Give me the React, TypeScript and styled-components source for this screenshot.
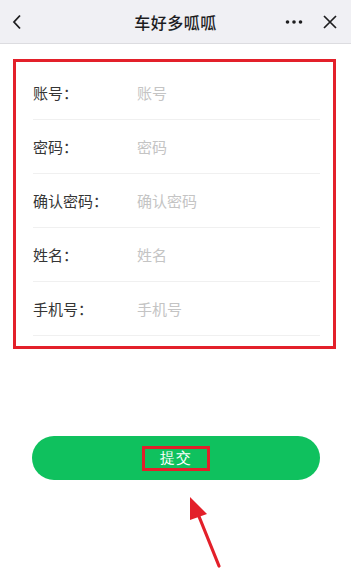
import React from 'react'
import styled, { createGlobalStyle } from 'styled-components'

const GlobalStyle = createGlobalStyle`
  html, body {
    margin: 0;
    padding: 0;
    background: #ffffff;
  }
  body {
    font-family: 'Noto Sans CJK SC', 'Noto Sans', sans-serif;
  }
  * {
    box-sizing: border-box;
  }
`

const Page = styled.div`
  position: relative;
  width: 351px;
  height: 580px;
  overflow: hidden;
  background: #ffffff;
`

const NavBar = styled.div`
  display: grid;
  grid-template-columns: 60px 1fr 60px;
  align-items: center;
  height: 44px;
  background: #f0f0f4;
  border-bottom: 1px solid #dcdce0;
`

const NavTitle = styled.div`
  text-align: center;
  font-size: 16px;
  font-weight: 500;
  color: #1d1d1f;
  letter-spacing: 0.5px;
`

const NavLeft = styled.div`
  display: flex;
  align-items: center;
  padding-left: 12px;
`

const NavRight = styled.div`
  display: flex;
  align-items: center;
  justify-content: flex-end;
  gap: 20px;
  padding-right: 14px;
  margin-left: -20px;
`

const FormBox = styled.div`
  margin: 15px 15px 0 13px;
  border: 3px solid #e3202a;
  padding: 4px 13px 10px 17px;
`

const Row = styled.label`
  display: flex;
  align-items: center;
  height: 54px;
  border-bottom: 1px solid #f0f0f0;
`

const Label = styled.span`
  width: 104px;
  flex-shrink: 0;
  font-size: 15px;
  color: #353535;
`

const Input = styled.input`
  flex: 1;
  min-width: 0;
  border: none;
  outline: none;
  background: transparent;
  font-family: inherit;
  font-size: 15px;
  color: #333;
  padding: 0;
  &::placeholder {
    color: #c4c4c4;
  }
`

const SubmitButton = styled.button`
  display: flex;
  align-items: center;
  justify-content: center;
  width: 288px;
  height: 44px;
  margin: 87px 0 0 32px;
  border: none;
  border-radius: 22px;
  background: #0fc15e;
  cursor: pointer;
  padding: 0;
`

const ButtonText = styled.span`
  display: flex;
  align-items: center;
  justify-content: center;
  width: 68px;
  height: 25px;
  border: 3px solid #e3202a;
  font-family: inherit;
  font-size: 15px;
  color: #ffffff;
  letter-spacing: 1px;
`

const Arrow = styled.svg`
  position: absolute;
  left: 0;
  top: 0;
  pointer-events: none;
`

const fields = [
  { label: '账号：', placeholder: '账号', type: 'text' },
  { label: '密码：', placeholder: '密码', type: 'password' },
  { label: '确认密码：', placeholder: '确认密码', type: 'password' },
  { label: '姓名：', placeholder: '姓名', type: 'text' },
  { label: '手机号：', placeholder: '手机号', type: 'tel' },
]

export default function App() {
  return (
    <Page>
      <GlobalStyle />
      <NavBar>
        <NavLeft>
          <svg width="10" height="16" viewBox="0 0 10 16">
            <path d="M8 1.5 L2 8 L8 14.5" fill="none" stroke="#1d1d1f" strokeWidth="1.8" />
          </svg>
        </NavLeft>
        <NavTitle>车好多呱呱</NavTitle>
        <NavRight>
          <svg width="18" height="4" viewBox="0 0 18 4">
            <circle cx="2.5" cy="2" r="1.8" fill="#1d1d1f" />
            <circle cx="9" cy="2" r="1.8" fill="#1d1d1f" />
            <circle cx="15.5" cy="2" r="1.8" fill="#1d1d1f" />
          </svg>
          <svg width="14" height="14" viewBox="0 0 14 14">
            <path d="M1 1 L13 13 M13 1 L1 13" fill="none" stroke="#1d1d1f" strokeWidth="1.7" />
          </svg>
        </NavRight>
      </NavBar>

      <FormBox>
        {fields.map((f) => (
          <Row key={f.label}>
            <Label>{f.label}</Label>
            <Input type={f.type} placeholder={f.placeholder} />
          </Row>
        ))}
      </FormBox>

      <SubmitButton type="button">
        <ButtonText>提交</ButtonText>
      </SubmitButton>

      <Arrow width="351" height="580" viewBox="0 0 351 580">
        <line x1="219" y1="566" x2="198" y2="514" stroke="#e3202a" strokeWidth="3.2" strokeLinecap="round" />
        <polygon points="190,497 190,520 207,514" fill="#e3202a" />
      </Arrow>
    </Page>
  )
}
